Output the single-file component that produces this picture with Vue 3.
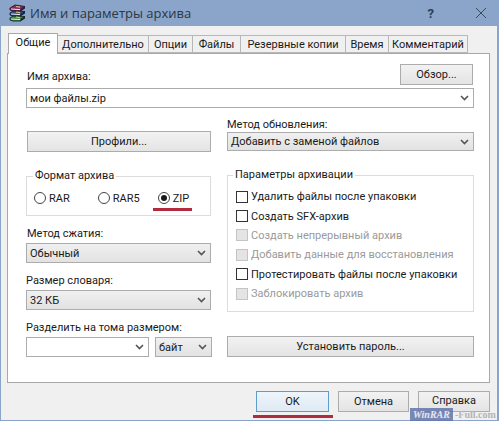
<template>
  <div class="window">
    <div class="titlebar">
      <svg class="app-icon" width="17" height="18" viewBox="0 0 17 18">
        <path d="M1 4 L6 1 L16 2.5 L12 5 L12 7 L4 7 L1 6 Z" fill="#8a2a5c" stroke="#241a2a" stroke-width="0.9" />
        <path d="M1 9 L4 7 L16 7.5 L12 10 L12 12 L4 12 L1 11 Z" fill="#34568f" stroke="#141c30" stroke-width="0.9" />
        <path d="M1 14 L4 12 L16 12.5 L12 15 L12 17 L4 17 L1 16 Z" fill="#3f8a4c" stroke="#14281a" stroke-width="0.9" />
        <path d="M12 5 L16 2.5 L16 4.5 L12 7 Z M12 10 L16 7.5 L16 9.5 L12 12 Z M12 15 L16 12.5 L16 14.5 L12 17 Z" fill="#1c2430" />
        <path d="M2 5 L11 5.6 M2 10 L11 10.6 M2 15 L11 15.6" stroke="#e8e8e8" stroke-width="1" />
        <path d="M7 2.5 L11 3.2 M7 8 L11 8.6 M7 13 L11 13.6" stroke="#d8c488" stroke-width="1.2" />
      </svg>
      <span class="title">Имя и параметры архива</span>
      <span class="help-mark">?</span>
      <svg class="close" width="12" height="12" viewBox="0 0 12 12">
        <path d="M1 1 L11 11 M11 1 L1 11" stroke="#3c4a5c" stroke-width="1" fill="none" />
      </svg>
    </div>

    <div class="body">
      <div class="tabs">
        <div
          v-for="(tab, i) in tabs"
          :key="tab.text"
          class="tab"
          :class="{ active: i === 0 }"
          :style="{ width: tab.width + 'px' }"
        >{{ tab.text }}</div>
      </div>

      <div class="panel">
        <div class="name-head">
          <label class="name-label">Имя архива:</label>
          <button class="btn browse">Обзор...</button>
        </div>
        <div class="combo name-combo">
          <span>мои файлы.zip</span>
          <svg class="chev" width="9" height="6" viewBox="0 0 9 6"><path d="M1 1 L4.5 4.5 L8 1" /></svg>
        </div>

        <div class="columns">
          <div class="col left">
            <button class="btn profiles">Профили...</button>

            <fieldset class="group format">
              <legend>Формат архива</legend>
              <div class="radios">
                <label class="radio"><i class="dot"></i>RAR</label>
                <label class="radio r5"><i class="dot"></i>RAR5</label>
                <label class="radio zip"><i class="dot on"></i>ZIP<span class="mark zip-mark"></span></label>
              </div>
            </fieldset>

            <label class="lbl method">Метод сжатия:</label>
            <div class="combo gray">
              <span>Обычный</span>
              <svg class="chev" width="9" height="6" viewBox="0 0 9 6"><path d="M1 1 L4.5 4.5 L8 1" /></svg>
            </div>

            <label class="lbl">Размер словаря:</label>
            <div class="combo gray">
              <span>32 КБ</span>
              <svg class="chev" width="9" height="6" viewBox="0 0 9 6"><path d="M1 1 L4.5 4.5 L8 1" /></svg>
            </div>

            <label class="lbl">Разделить на тома размером:</label>
            <div class="split-row">
              <div class="combo vol">
                <span></span>
                <svg class="chev" width="9" height="6" viewBox="0 0 9 6"><path d="M1 1 L4.5 4.5 L8 1" /></svg>
              </div>
              <div class="combo gray unit">
                <span>байт</span>
                <svg class="chev" width="9" height="6" viewBox="0 0 9 6"><path d="M1 1 L4.5 4.5 L8 1" /></svg>
              </div>
            </div>
          </div>

          <div class="col right">
            <label class="lbl update">Метод обновления:</label>
            <div class="combo gray update-combo">
              <span>Добавить с заменой файлов</span>
              <svg class="chev" width="9" height="6" viewBox="0 0 9 6"><path d="M1 1 L4.5 4.5 L8 1" /></svg>
            </div>

            <fieldset class="group params">
              <legend>Параметры архивации</legend>
              <label
                v-for="opt in options"
                :key="opt.text"
                class="check"
                :class="{ disabled: opt.disabled }"
              ><i class="box"></i>{{ opt.text }}</label>
            </fieldset>

            <button class="btn password">Установить пароль...</button>
          </div>
        </div>
      </div>

      <div class="footer">
        <button class="btn foot ok">OK<span class="mark ok-mark"></span></button>
        <button class="btn foot cancel">Отмена</button>
        <button class="btn foot help"><span>Справка</span></button>
      </div>
    </div>

    <div class="watermark"><b>WinRAR</b><span>-Full.com</span></div>
  </div>
</template>

<script setup>
const tabs = [
  { text: 'Общие', width: 50 },
  { text: 'Дополнительно', width: 91 },
  { text: 'Опции', width: 44 },
  { text: 'Файлы', width: 48 },
  { text: 'Резервные копии', width: 105 },
  { text: 'Время', width: 43 },
  { text: 'Комментарий', width: 79 }
]

const options = [
  { text: 'Удалить файлы после упаковки', disabled: false },
  { text: 'Создать SFX-архив', disabled: false },
  { text: 'Создать непрерывный архив', disabled: true },
  { text: 'Добавить данные для восстановления', disabled: true },
  { text: 'Протестировать файлы после упаковки', disabled: false },
  { text: 'Заблокировать архив', disabled: true }
]
</script>

<style>
html, body {
  margin: 0;
  background: #f0f0f0;
}
</style>

<style scoped>
.window {
  position: relative;
  width: 499px;
  height: 421px;
  overflow: hidden;
  box-sizing: border-box;
  background: #8aa5c9;
  font-family: Roboto, "Liberation Sans", sans-serif;
  font-size: 11px;
  color: #1a1a1a;
}

.titlebar {
  display: flex;
  align-items: center;
  height: 26px;
  padding: 0 9px 0 9px;
  background: #8aa5c9;
}

.app-icon {
  flex: none;
  margin-right: 4px;
}

.title {
  flex: 1;
  font-family: "Open Sans", sans-serif;
  font-size: 13px;
  color: #2c3644;
}

.help-mark {
  font-weight: 700;
  font-size: 13px;
  color: #26405f;
  margin-right: 41px;
}

.close {
  margin-right: 3px;
}

.body {
  height: 394px;
  margin: 0 2px 0 1px;
  padding: 9px 7px 0 6px;
  box-sizing: border-box;
  background: #f0f0f0;
}

.tabs {
  display: flex;
  height: 18px;
  padding-left: 1px;
}

.tab {
  height: 18px;
  box-sizing: border-box;
  line-height: 17px;
  text-align: center;
  background: #f0f0f0;
  border: 1px solid #b8b8b8;
  border-left-width: 0;
  white-space: nowrap;
}

.tab.active {
  position: relative;
  z-index: 1;
  height: 21px;
  margin-top: -2px;
  background: #fff;
  border: 1px solid #a8a8a8;
  border-bottom: 0;
}

.panel {
  height: 330px;
  padding: 10px 15px 0 18px;
  box-sizing: border-box;
  background: #fff;
  border: 1px solid #a8a8a8;
}

.name-head {
  display: flex;
  justify-content: space-between;
  height: 24px;
}

.name-label {
  padding-top: 6px;
  margin-left: 1px;
}

.btn {
  display: block;
  box-sizing: border-box;
  height: 21px;
  padding: 0;
  font: inherit;
  color: #1a1a1a;
  background: linear-gradient(#f2f2f2, #e4e4e4);
  border: 1px solid #acacac;
}

.browse {
  width: 73px;
  margin-right: 1px;
}

.combo {
  display: flex;
  align-items: center;
  justify-content: space-between;
  box-sizing: border-box;
  height: 20px;
  padding: 0 4px 0 3px;
  background: #fff;
  border: 1px solid #acacac;
}

.combo.gray {
  background: linear-gradient(#f0f0f0, #e2e2e2);
}

.chev {
  flex: none;
  fill: none;
  stroke: #555;
  stroke-width: 1.6;
}

.columns {
  display: grid;
  grid-template-columns: 185px 247px;
  gap: 16px;
}

.col {
  display: flex;
  flex-direction: column;
}

.profiles {
  width: 184px;
  margin-top: 23px;
  margin-left: 1px;
}

.group {
  margin: 0;
  min-width: 0;
  box-sizing: border-box;
  background: #fff;
  border: 1px solid #dcdcdc;
}

.group legend {
  padding: 0 2px;
  line-height: 14px;
}

.format {
  height: 47px;
  margin-top: 17px;
  padding: 5px 0 0 7px;
}

.format legend {
  margin-left: -1px;
}

.radios {
  display: flex;
  align-items: center;
  height: 20px;
}

.radio {
  position: relative;
  display: flex;
  align-items: center;
  gap: 3px;
}

.r5 {
  margin-left: 28px;
}

.zip {
  margin-left: 18px;
}

.dot {
  display: flex;
  align-items: center;
  justify-content: center;
  width: 12px;
  height: 12px;
  box-sizing: border-box;
  border: 1px solid #444;
  border-radius: 50%;
  background: #fff;
}

.dot.on::after {
  content: "";
  width: 6px;
  height: 6px;
  border-radius: 50%;
  background: #1a1a1a;
}

.mark {
  position: absolute;
  height: 3px;
  background: #b22a3e;
}

.zip-mark {
  left: -5px;
  bottom: -6px;
  width: 39px;
}

.lbl {
  display: block;
  margin-top: 11px;
  margin-bottom: 2px;
  line-height: 14px;
}

.method {
  margin-left: 1px;
}

.split-row {
  display: flex;
  gap: 6px;
}

.vol {
  width: 123px;
  flex: none;
}

.unit {
  width: 57px;
  flex: none;
}

.update {
  margin-top: 10px;
  margin-bottom: 0;
}

.update-combo {
  height: 19px;
}

.params {
  height: 144px;
  margin-top: 17px;
  padding: 5px 0 0 8px;
}

.params legend {
  margin-left: -3px;
}

.check {
  display: flex;
  align-items: center;
  gap: 3px;
  height: 19.4px;
}

.box {
  width: 12px;
  height: 12px;
  box-sizing: border-box;
  border: 1px solid #333;
  background: #fff;
}

.check.disabled {
  color: #9a9a9a;
}

.check.disabled .box {
  border-color: #c4c4c4;
  background: #e4e4e4;
}

.password {
  margin-top: 24px;
}

.footer {
  display: flex;
  justify-content: flex-end;
  gap: 9px;
  padding-top: 8px;
}

.foot {
  position: relative;
  width: 72px;
  height: 21px;
}

.help span {
  display: block;
  line-height: 15px;
  margin-top: -2px;
}

.ok {
  width: 73px;
  background: linear-gradient(#eef5fb, #dfeaf4);
  border-color: #5e9ccb;
}

.cancel {
  width: 71px;
}

.ok-mark {
  left: -4px;
  bottom: -7px;
  width: 80px;
}

.watermark {
  position: absolute;
  right: 0;
  bottom: 0;
  display: flex;
  align-items: center;
  height: 13px;
  font-family: "Liberation Serif", serif;
  font-size: 10px;
  font-weight: 700;
  line-height: 13px;
  white-space: nowrap;
}

.watermark b {
  width: 43px;
  text-align: center;
  color: #e4e8f2;
  font-style: italic;
  background: rgba(100, 116, 170, 0.85);
}

.watermark span {
  width: 46px;
  padding-left: 2px;
  box-sizing: border-box;
  color: #b4b4b4;
}
</style>
